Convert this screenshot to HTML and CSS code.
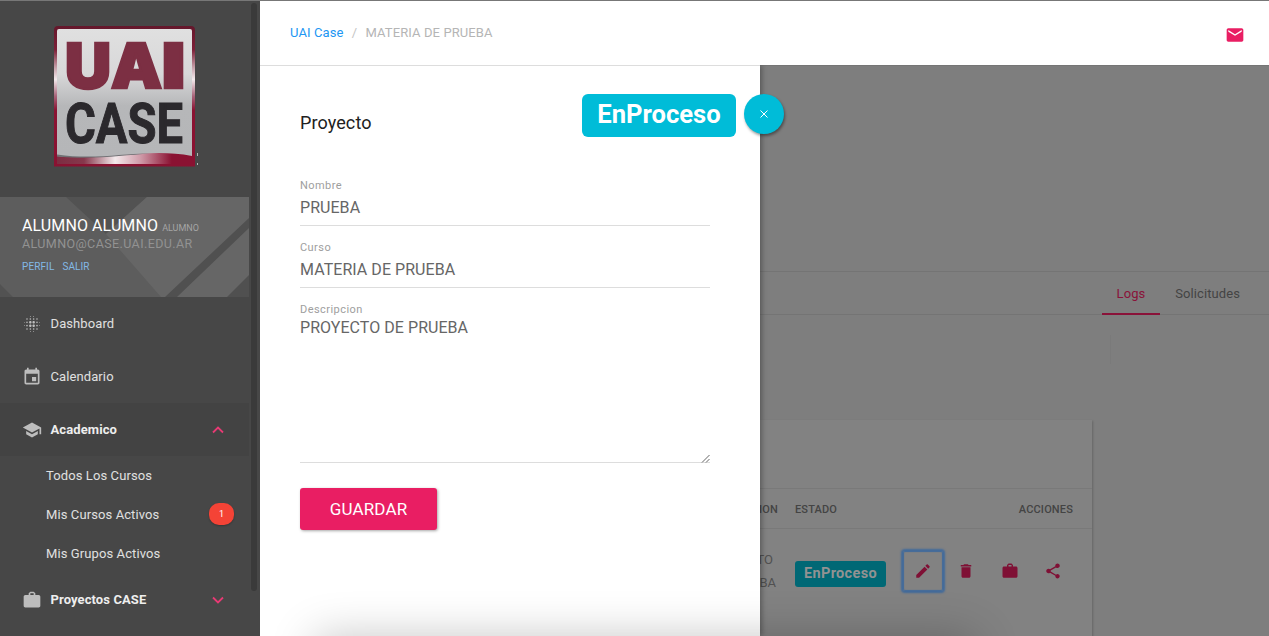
FILE: index.html
```html
<!DOCTYPE html>
<html lang="es">
<head>
<meta charset="utf-8">
<title>UAI Case</title>
<link rel="stylesheet" href="styles.css">
</head>
<body>
<div class="app">
  <aside class="sidebar">
    <div class="side-content">
      <div class="brand">
        <svg width="146" height="144" viewBox="0 0 146 144">
          <defs>
            <linearGradient id="frame" x1="0" y1="0" x2="0" y2="1">
              <stop offset="0" stop-color="#64172b"/><stop offset=".17" stop-color="#7c2038"/><stop offset=".3" stop-color="#c9a5ae"/><stop offset=".38" stop-color="#f3eaec"/><stop offset=".5" stop-color="#a8647a"/><stop offset=".6" stop-color="#8a1232"/><stop offset="1" stop-color="#8a1232"/>
            </linearGradient>
            <linearGradient id="metal" x1="0" y1="0" x2="0" y2="1">
              <stop offset="0" stop-color="#e0e0e0"/><stop offset=".35" stop-color="#d8d8d9"/><stop offset=".6" stop-color="#b6b7b9"/><stop offset="1" stop-color="#b5b6b8"/>
            </linearGradient>
            <linearGradient id="wave" x1="0" y1="0" x2="1" y2="0">
              <stop offset="0" stop-color="#7c2d42"/><stop offset=".2" stop-color="#86384c"/><stop offset=".43" stop-color="#f4eaec"/><stop offset=".62" stop-color="#cf9aa8"/><stop offset=".85" stop-color="#8a1232"/><stop offset="1" stop-color="#8a1232"/>
            </linearGradient>
          </defs>
          <path d="M4 -1H137Q141 -1 141 3V139.500H0V3Q0 -1 4 -1Z" fill="url(#frame)"/>
          <path d="M5 2H136Q138 2 138 4V130H3V4Q3 2 5 2Z" fill="url(#metal)"/>
          <path d="M3 129C50 135 92 120 138 129V137H3Z" fill="url(#wave)"/>
          <path d="M3 127.500C40 133 70 126 96 126.500C70 128 40 133 3 129.500Z" fill="#6f7073"/>
          <text class="logo-uai" x="11" y="61" textLength="46" lengthAdjust="spacingAndGlyphs">U</text>
          <text class="logo-uai" x="57" y="61" textLength="51" lengthAdjust="spacingAndGlyphs">A</text>
          <text class="logo-uai" x="107.500" y="61" textLength="24" lengthAdjust="spacingAndGlyphs">I</text>
          <text class="logo-case" x="11" y="115.500" textLength="118" lengthAdjust="spacingAndGlyphs">CASE</text>
          <path d="M143.500 126v3M143.500 136v2" stroke="#b5b5b5"/>
        </svg>
      </div>
      <div class="profile">
        <svg class="profile-bg" width="249" height="100" viewBox="0 0 249 100">
          <path fill="#5d5d5d" d="M0 0H249V100H0Z"/>
          <path fill="#525252" d="M66 0H147L106 37ZM0 87L13 100H0Z"/>
          <path fill="#666" d="M147 0H249V100H161L106 37Z"/>
          <path fill="#505050" d="M249 21V31L177 100H165ZM249 78V100H227Z"/>
        </svg>
        <div class="profile-name">ALUMNO ALUMNO <small>ALUMNO</small></div>
        <div class="profile-mail">ALUMNO@CASE.UAI.EDU.AR</div>
        <div class="profile-links"><a>PERFIL</a><a>SALIR</a></div>
      </div>
      <nav class="menu">
        <a class="item">
          <svg class="ico" viewBox="0 0 24 24"><path d="M3 9.500c-.28 0-.5.22-.5.500s.22.500.500.500.500-.22.500-.500-.22-.500-.500-.500zM6 17c-.55 0-1 .45-1 1s.45 1 1 1 1-.45 1-1-.45-1-1-1zm0-4c-.55 0-1 .45-1 1s.45 1 1 1 1-.45 1-1-.45-1-1-1zm0-4c-.55 0-1 .45-1 1s.45 1 1 1 1-.45 1-1-.45-1-1-1zm-3 4.500c-.28 0-.5.22-.5.500s.22.500.500.500.500-.22.500-.500-.22-.500-.500-.500zM6 5c-.55 0-1 .45-1 1s.45 1 1 1 1-.45 1-1-.45-1-1-1zm15 5.500c.28 0 .5-.22.5-.5s-.22-.5-.5-.5-.5.22-.5.5.22.5.5.5zM14 7c.55 0 1-.45 1-1s-.45-1-1-1-1 .45-1 1 .45 1 1 1zm0-3.500c.28 0 .5-.22.5-.5s-.22-.5-.5-.5-.5.22-.5.5.22.5.5.5zM10 20.500c-.28 0-.5.22-.5.5s.22.5.5.5.5-.22.5-.5-.22-.5-.5-.5zm0-17c.28 0 .5-.22.5-.5s-.22-.5-.5-.5-.5.22-.5.5.22.5.5.5zM10 7c.55 0 1-.45 1-1s-.45-1-1-1-1 .45-1 1 .45 1 1 1zm0 5.500c-.83 0-1.500.67-1.500 1.500s.67 1.500 1.500 1.500 1.500-.67 1.500-1.500-.67-1.500-1.500-1.500zm8 .5c-.55 0-1 .45-1 1s.45 1 1 1 1-.45 1-1-.45-1-1-1zm0 4c-.55 0-1 .45-1 1s.45 1 1 1 1-.45 1-1-.45-1-1-1zm0-8c-.55 0-1 .45-1 1s.45 1 1 1 1-.45 1-1-.45-1-1-1zm0-4c-.55 0-1 .45-1 1s.45 1 1 1 1-.45 1-1-.45-1-1-1zm3 8.500c-.28 0-.5.22-.5.5s.22.5.5.5.5-.22.5-.5-.22-.5-.5-.5zM14 17c-.55 0-1 .45-1 1s.45 1 1 1 1-.45 1-1-.45-1-1-1zm0 3.500c-.28 0-.5.22-.5.5s.22.5.5.5.5-.22.5-.5-.22-.5-.5-.5zm-4-12c-.83 0-1.500.67-1.500 1.500s.67 1.500 1.500 1.500 1.500-.67 1.500-1.500-.67-1.500-1.500-1.500zm0 8.500c-.55 0-1 .45-1 1s.45 1 1 1 1-.45 1-1-.45-1-1-1zm4-4.500c-.83 0-1.500.67-1.500 1.500s.67 1.500 1.500 1.500 1.500-.67 1.500-1.500-.67-1.500-1.500-1.500zm0-4c-.83 0-1.500.67-1.500 1.500s.67 1.500 1.500 1.500 1.500-.67 1.500-1.500-.67-1.500-1.500-1.500z"/></svg>
          <span>Dashboard</span>
        </a>
        <a class="item">
          <svg class="ico" viewBox="0 0 24 24"><path d="M17 12h-5v5h5v-5zM16 1v2H8V1H6v2H5c-1.110 0-1.990.9-1.990 2L3 19c0 1.100.89 2 2 2h14c1.100 0 2-.9 2-2V5c0-1.100-.9-2-2-2h-1V1h-2zm3 18H5V8h14v11z"/></svg>
          <span>Calendario</span>
        </a>
        <a class="item active">
          <svg class="ico" viewBox="0 0 24 24"><path d="M5 13.180v4L12 21l7-3.820v-4L12 17l-7-3.820zM12 3L1 9l11 6 9-4.910V17h2V9L12 3z"/></svg>
          <span>Academico</span>
          <svg class="caret" viewBox="0 0 12 8"><path d="M1 6.500L6 1.500L11 6.500"/></svg>
        </a>
        <a class="sub">Todos Los Cursos</a>
        <a class="sub">Mis Cursos Activos<b class="count">1</b></a>
        <a class="sub">Mis Grupos Activos</a>
        <a class="item strong">
          <svg class="ico" viewBox="0 0 24 24"><path d="M20 6h-4V4l-2-2h-4L8 4v2H4c-1.100 0-2 .9-2 2v11c0 1.100.9 2 2 2h16c1.100 0 2-.9 2-2V8c0-1.100-.9-2-2-2zm-6 0h-4V4h4v2z"/></svg>
          <span>Proyectos CASE</span>
          <svg class="caret" viewBox="0 0 12 8"><path d="M1 1.500L6 6.500L11 1.500"/></svg>
        </a>
      </nav>
    </div>
    <div class="scroll-thumb"></div>
  </aside>

  <div class="main">
    <header class="topbar">
      <div class="crumbs"><a>UAI Case</a><i>/</i><span>MATERIA DE PRUEBA</span></div>
      <svg class="mail" viewBox="0 0 24 24"><path d="M20 4H4c-1.100 0-1.990.9-1.990 2L2 18c0 1.100.9 2 2 2h16c1.100 0 2-.9 2-2V6c0-1.100-.9-2-2-2zm0 4l-8 5-8-5V6l8 5 8-5v2z"/></svg>
    </header>
    <div class="stage">
      <section class="drawer">
        <div class="drawer-head">
          <h1>Proyecto</h1>
          <span class="status-lg">EnProceso</span>
        </div>
        <button class="close"><svg width="8" height="8" viewBox="0 0 8 8"><path d="M.5 .5L7.500 7.500M7.500 .5L.5 7.500"/></svg></button>
        <div class="field"><label>Nombre</label><div class="value">PRUEBA</div></div>
        <div class="field"><label>Curso</label><div class="value">MATERIA DE PRUEBA</div></div>
        <div class="field area"><label>Descripcion</label><div class="value">PROYECTO DE PRUEBA</div>
          <svg class="grip" width="9" height="9" viewBox="0 0 9 9"><path d="M1 8.500L8.500 1M5 8.500L8.500 5"/></svg>
        </div>
        <button class="save">GUARDAR</button>
      </section>
      <section class="page">
        <div class="tabs"><a class="tab on">Logs</a><a class="tab">Solicitudes</a></div>
        <div class="divider"></div>
        <div class="card">
          <div class="row head"><span class="c-desc">DESCRIPCION</span><span>ESTADO</span><span class="c-act">ACCIONES</span></div>
          <div class="row body">
            <div class="c-desc"><span class="line-a">PROYECTO</span><span>DE PRUEBA</span></div>
            <div><span class="status">EnProceso</span></div>
            <div class="actions">
              <a class="act focus"><svg viewBox="0 0 24 24"><path d="M3 17.250V21h3.750L17.810 9.940l-3.750-3.750L3 17.250zM20.710 7.040c.39-.39.39-1.020 0-1.410l-2.340-2.340c-.39-.39-1.020-.39-1.410 0l-1.830 1.830 3.750 3.750 1.830-1.830z"/></svg></a>
              <a class="act"><svg viewBox="0 0 24 24"><path d="M6 19c0 1.100.9 2 2 2h8c1.100 0 2-.9 2-2V7H6v12zM19 4h-3.500l-1-1h-5l-1 1H5v2h14V4z"/></svg></a>
              <a class="act"><svg viewBox="0 0 24 24"><path d="M20 6h-4V4l-2-2h-4L8 4v2H4c-1.100 0-2 .9-2 2v11c0 1.100.9 2 2 2h16c1.100 0 2-.9 2-2V8c0-1.100-.9-2-2-2zm-6 0h-4V4h4v2z"/></svg></a>
              <a class="act"><svg viewBox="0 0 24 24"><path d="M18 16.080c-.76 0-1.440.3-1.960.77L8.910 12.700c.05-.23.09-.46.09-.7s-.04-.47-.09-.7l7.050-4.110c.54.5 1.250.81 2.040.81 1.660 0 3-1.340 3-3s-1.340-3-3-3-3 1.340-3 3c0 .24.04.47.09.7L8.040 9.810C7.500 9.310 6.790 9 6 9c-1.660 0-3 1.340-3 3s1.340 3 3 3c.79 0 1.500-.31 2.040-.81l7.120 4.160c-.05.21-.08.43-.08.65 0 1.610 1.310 2.920 2.920 2.920s2.920-1.310 2.920-2.920-1.310-2.920-2.920-2.920z"/></svg></a>
            </div>
          </div>
        </div>
      </section>
      <div class="foot-shadow"></div>
    </div>
  </div>
</div>
</body>
</html>
```
FILE: styles.css
```css
* { box-sizing: border-box; }
body {
  margin: 0;
  height: 636px;
  overflow: hidden;
  font: 13px/20px Roboto, "Liberation Sans", sans-serif;
  letter-spacing: .1px;
}
.app { display: flex; height: 636px; border-top: 1px solid #777; }

/* Sidebar */
.sidebar { display: flex; width: 260px; flex: none; background: #474747; overflow: hidden; }
.side-content { width: 249px; height: 636px; }
.scroll-thumb { width: 6px; height: 588px; margin: 2px 0 0 2px; border-radius: 3px; background: #3a3a3a; }
.brand { height: 196px; padding: 26px 0 0 54px; }
.brand svg { display: block; overflow: visible; }
.logo-uai { font: 900 62px Inter, sans-serif; fill: #7c2f43; letter-spacing: 0; stroke: #7c2f43; stroke-width: 2.500; }
.logo-case { font: 700 56px Roboto, sans-serif; fill: #2b292d; letter-spacing: 0; stroke: #2b292d; stroke-width: 1; }

.profile { position: relative; height: 100px; padding: 19px 0 0 22px; overflow: hidden; }
.profile-bg { position: absolute; left: 0; top: 0; }
.profile-name, .profile-mail, .profile-links { position: relative; white-space: nowrap; }
.profile-name { height: 19px; font-size: 16px; line-height: 19px; color: #fff; }
.profile-name small { font-size: 9px; color: #a5a5a5; letter-spacing: 0; }
.profile-mail { font-size: 12.500px; line-height: 18px; color: #929292; letter-spacing: .4px; }
.profile-links { display: flex; gap: 8px; margin-top: 5px; font-size: 10px; line-height: 18px; color: #83b9e6; letter-spacing: .1px; }

.item { display: flex; align-items: center; height: 53px; padding: 0 25px 0 22px; color: #e0e0e0; }
.item span { margin-left: 8.500px; flex: 1; }
.ico { width: 20px; height: 20px; fill: #bdbdbd; }
.active { background: #434343; }
.active, .strong { font-weight: 700; color: #eee; }
.caret { width: 12px; height: 8px; fill: none; stroke: #e83a74; stroke-width: 1.800; }
.sub { display: flex; align-items: center; justify-content: space-between; height: 39px; padding: 0 15px 0 46px; color: #e0e0e0; }
.count {
  width: 25px; height: 22px; margin-top: -1px; border-radius: 10px; background: #f44336; color: #fff;
  font-weight: 400; font-size: 9px; line-height: 22px; text-align: center; letter-spacing: 0;
  box-shadow: 0 1px 2px rgba(0,0,0,.25);
}

/* Top bar */
.main { flex: 1; display: flex; flex-direction: column; min-width: 0; }
.topbar { height: 64px; display: flex; justify-content: space-between; padding: 22px 24px 0 30px; background: #fff; }
.crumbs { display: flex; gap: 8.300px; color: #b5b5b5; }
.crumbs a { color: #2196f3; }
.crumbs i { font-style: normal; color: #c4c4c4; }
.mail { width: 20px; height: 20px; margin-top: 2px; fill: #e91e63; }

/* Drawer */
.stage { position: relative; display: flex; height: 571px; overflow: hidden; }
.drawer {
  position: relative; z-index: 1; width: 500px; flex: none; padding: 28px 50px 0 40px;
  border-top: 1px solid #ddd; background: #fff; box-shadow: 2px 0 5px rgba(0,0,0,.3);
}
.drawer-head { display: flex; justify-content: space-between; height: 83px; margin-right: -26px; }
.drawer-head h1 { margin: 19px 0 0; font-size: 18px; font-weight: 400; line-height: 20px; color: #212121; letter-spacing: .1px; }
.status-lg {
  width: 154px; height: 43px; border-radius: 6px; background: #00bcd8; color: #fff;
  font-size: 25.600px; font-weight: 700; line-height: 41px; text-align: center; letter-spacing: 0;
}
.close {
  position: absolute; left: 484px; top: 28px; width: 40px; height: 40px; padding: 0; border: 0; border-radius: 50%;
  background: #00bcd8; display: flex; align-items: center; justify-content: center; box-shadow: 1px 2px 3px rgba(0,0,0,.4);
}
.close path { stroke: #fff; stroke-width: 1; }
.field { height: 49px; margin-bottom: 13px; border-bottom: 1px solid #ddd; }
.field label { display: block; padding-top: 1px; font-size: 11px; line-height: 16px; color: #9e9e9e; letter-spacing: .45px; }
.value { margin-top: 4px; font-size: 16px; line-height: 20px; color: #666; letter-spacing: .05px; }
.area { position: relative; height: 162px; margin-bottom: 25px; }
.area .value { margin-top: 0; }
.grip { position: absolute; right: 0; bottom: -1px; }
.grip path { stroke: #555; stroke-width: .9; }
.save {
  display: block; width: 137px; height: 42px; padding: 0; border: 0; border-radius: 3px; background: #e91e63; color: #fff;
  font: 17px/42px Roboto, sans-serif; letter-spacing: .15px; box-shadow: 1px 1px 3px rgba(0,0,0,.35);
}

/* Dimmed page */
.page { flex: 1; min-width: 0; padding-top: 205px; background: #7e7e7e; border-top: 1px solid #757575; }
.tabs { display: flex; justify-content: flex-end; height: 44px; padding-right: 14px; border: solid #747474; border-width: 1px 0; }
.tab { height: 43px; padding: 0 15px; line-height: 43px; color: #444; }
.on { padding: 0 14.700px; color: #8a1239; border-bottom: 2px solid #8a1239; }
.divider { width: 1px; height: 29px; margin: 20px 0 56px 350px; background: #7a7a7a; }
.card { width: 332px; height: 221px; padding-top: 68px; background: #828282; box-shadow: 1px 1px 2px rgba(0,0,0,.2); }
.row { display: grid; grid-template-columns: 35px 108px 1fr; border-top: 1px solid #797979; color: #444; }
.head { height: 40px; padding-right: 19px; font-size: 11px; font-weight: 500; line-height: 41px; border-bottom: 0; letter-spacing: .15px; }
.c-desc { display: flex; justify-content: flex-end; padding-right: 17px; white-space: nowrap; }
.c-act { text-align: right; }
.body { height: 90px; }
.body .c-desc {
  flex-direction: column; justify-content: flex-start; align-items: flex-end; padding: 19px 19px 0 0;
  font-size: 13px; line-height: 23px; color: #505050; letter-spacing: 0;
}
.line-a { margin-right: 3px; }
.status {
  display: block; width: 91px; height: 26px; margin-top: 32px; border-radius: 3px; background: #006875; color: #929292;
  font-size: 14.500px; font-weight: 700; line-height: 25px; text-align: center; letter-spacing: .35px;
}
.actions { display: flex; gap: 3.300px; padding-top: 22px; }
.act { width: 40px; height: 40px; display: flex; align-items: center; justify-content: center; border-radius: 2px; }
.act svg { width: 18px; height: 18px; fill: #7f1035; }
.focus { box-shadow: 0 0 2px 2px #416a9b, inset 0 0 1px 1px #416a9b; }

.foot-shadow { position: absolute; z-index: 2; left: 55px; top: 572px; width: 660px; height: 60px; box-shadow: 0 0 46px rgba(0,0,0,.23); }
```
